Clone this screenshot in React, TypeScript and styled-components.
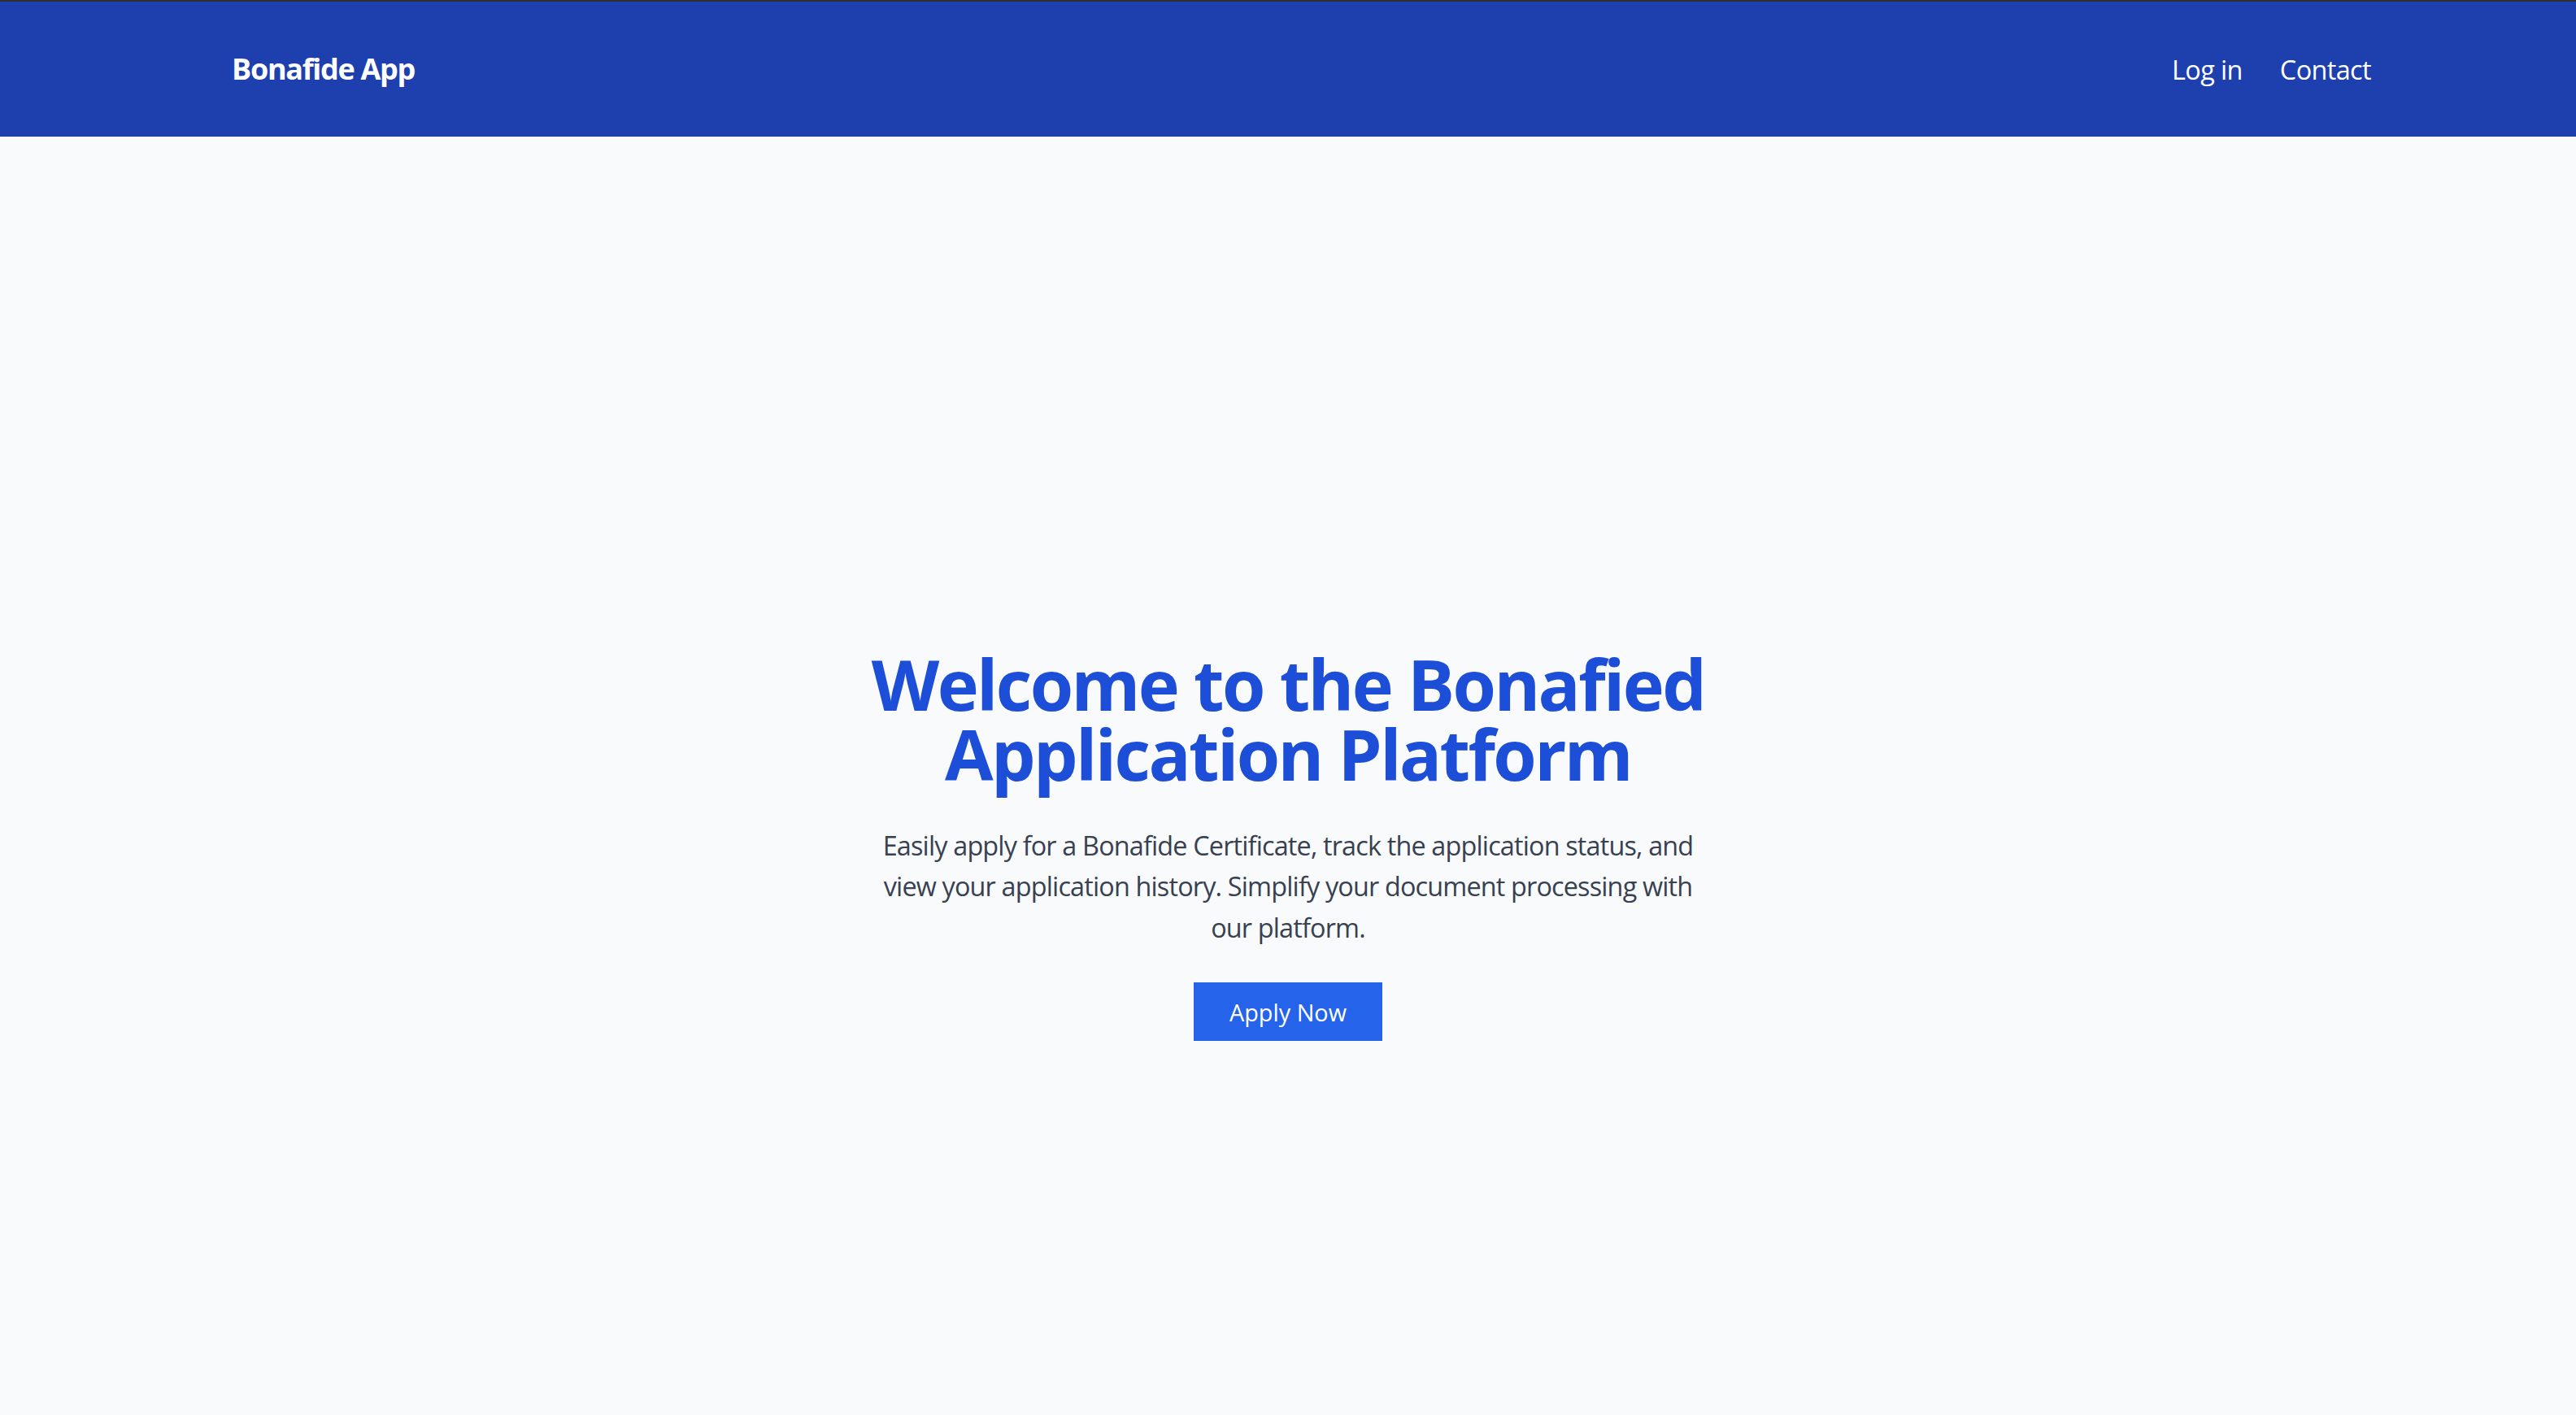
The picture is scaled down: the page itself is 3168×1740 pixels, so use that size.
import React from "react";
import styled, { createGlobalStyle } from "styled-components";

const GlobalStyle = createGlobalStyle`
  * { box-sizing: border-box; }
  html, body { margin: 0; padding: 0; }
  body {
    font-family: "Open Sans", "Noto Sans", sans-serif;
    background: #f9fafb;
    color: #374151;
    border-top: 2px solid #2f2f30;
  }
`;

const Page = styled.div`
  min-height: calc(100vh - 2px);
  display: flex;
  flex-direction: column;
`;

const Header = styled.header`
  height: 166px;
  background: #1e40af;
  display: flex;
  align-items: center;
  justify-content: space-between;
  padding: 0 252px 0 285px;
  flex-shrink: 0;
`;

const Logo = styled.a`
  font-size: 36px;
  line-height: 50px;
  font-weight: 700;
  letter-spacing: -1.3px;
  color: #ffffff;
  text-decoration: none;
`;

const Nav = styled.nav`
  display: flex;
  align-items: center;
  gap: 46px;
`;

const NavLink = styled.a`
  font-size: 32.4px;
  line-height: 45px;
  font-weight: 500;
  letter-spacing: -0.6px;
  color: #ffffff;
  text-decoration: none;
`;

const Main = styled.main`
  flex: 1;
  display: flex;
  align-items: center;
  justify-content: center;
  padding-top: 170px;
`;

const Hero = styled.section`
  display: flex;
  flex-direction: column;
  align-items: center;
  text-align: center;
`;

const Title = styled.h1`
  margin: 0 0 43.2px;
  font-size: 86.4px;
  line-height: 86.4px;
  font-weight: 700;
  letter-spacing: -2.6px;
  color: #1d4ed8;
`;

const Lead = styled.p`
  margin: 0 0 43.2px;
  max-width: 1037px;
  font-size: 32.4px;
  line-height: 50.4px;
  font-weight: 400;
  letter-spacing: -0.84px;
  color: #374151;
`;

const PrimaryButton = styled.button`
  border: none;
  border-radius: 0;
  background: #2563eb;
  color: #ffffff;
  font-family: inherit;
  font-size: 28.8px;
  line-height: 43.2px;
  font-weight: 500;
  padding: 14.4px 44px;
  cursor: pointer;
`;

export default function App() {
  return (
    <>
      <GlobalStyle />
      <Page>
        <Header>
          <Logo href="#">Bonafide App</Logo>
          <Nav>
            <NavLink href="#">Log in</NavLink>
            <NavLink href="#">Contact</NavLink>
          </Nav>
        </Header>
        <Main>
          <Hero>
            <Title>
              Welcome to the Bonafied
              <br />
              Application Platform
            </Title>
            <Lead>
              Easily apply for a Bonafide Certificate, track the application status, and view your
              application history. Simplify your document processing with our platform.
            </Lead>
            <PrimaryButton>Apply Now</PrimaryButton>
          </Hero>
        </Main>
      </Page>
    </>
  );
}
